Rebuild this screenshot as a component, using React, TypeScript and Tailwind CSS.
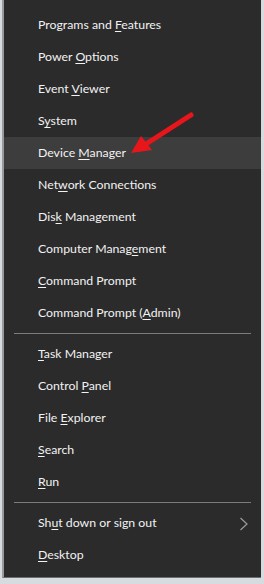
import React from 'react';

type Item = { label: string; key: number; active?: boolean; submenu?: boolean };

const groups: Item[][] = [
  [
    { label: 'Programs and Features', key: 13 },
    { label: 'Power Options', key: 6 },
    { label: 'Event Viewer', key: 6 },
    { label: 'System', key: 1 },
    { label: 'Device Manager', key: 7, active: true },
    { label: 'Network Connections', key: 3 },
    { label: 'Disk Management', key: 3 },
    { label: 'Computer Management', key: 14 },
    { label: 'Command Prompt', key: 0 },
    { label: 'Command Prompt (Admin)', key: 16 },
  ],
  [
    { label: 'Task Manager', key: 0 },
    { label: 'Control Panel', key: 8 },
    { label: 'File Explorer', key: 5 },
    { label: 'Search', key: 0 },
    { label: 'Run', key: 0 },
  ],
  [
    { label: 'Shut down or sign out', key: 2, submenu: true },
    { label: 'Desktop', key: 0 },
  ],
];

const Label = ({ label, at }: { label: string; at: number }) => (
  <span>
    {label.slice(0, at)}
    <span className="underline underline-offset-2">{label[at]}</span>
    {label.slice(at + 1)}
  </span>
);

const MenuRow = ({ item }: { item: Item }) => (
  <div
    className={`flex items-center h-[32px] pl-[34px] pr-[10px] pt-[1px] ${
      item.active ? 'bg-[#3d3d3d]' : ''
    }`}
  >
    <div className="flex-1">
      <Label label={item.label} at={item.key} />
    </div>
    {item.submenu && (
      <svg width="10" height="14" viewBox="0 0 10 14" className="mr-[2px]">
        <path d="M1.5 1 L8 7 L1.5 13" fill="none" stroke="#9c9c9c" strokeWidth="1.2" />
      </svg>
    )}
  </div>
);

export default function App() {
  return (
    <div className="w-[264px] h-[584px] bg-[#d6dbe0] flex flex-col">
      <div className="relative ml-[2px] w-[259px] h-[578px] bg-[#2b2b2b] border-l-2 border-[#9a9a9a] border-b border-b-[#6e6e6e] text-[#f2f2f2] text-[12.3px] pt-[9px]" style={{ fontFamily: 'Lato, "Open Sans", sans-serif' }}>
        {groups.map((g, gi) => (
          <div key={gi}>
            {gi > 0 && (
              <div className="py-[4px] px-[10px]">
                <div className="h-px bg-[#7c7c7c]" />
              </div>
            )}
            {g.map((item) => (
              <MenuRow key={item.label} item={item} />
            ))}
          </div>
        ))}
        <svg className="absolute left-[122px] top-[110px]" width="70" height="48" viewBox="0 0 70 48">
          <path d="M65 5 L20 34" stroke="#e8161b" strokeWidth="5" strokeLinecap="round" />
          <path d="M5 43 L15 26 L26 40 Z" fill="#e8161b" />
        </svg>
      </div>
    </div>
  );
}
